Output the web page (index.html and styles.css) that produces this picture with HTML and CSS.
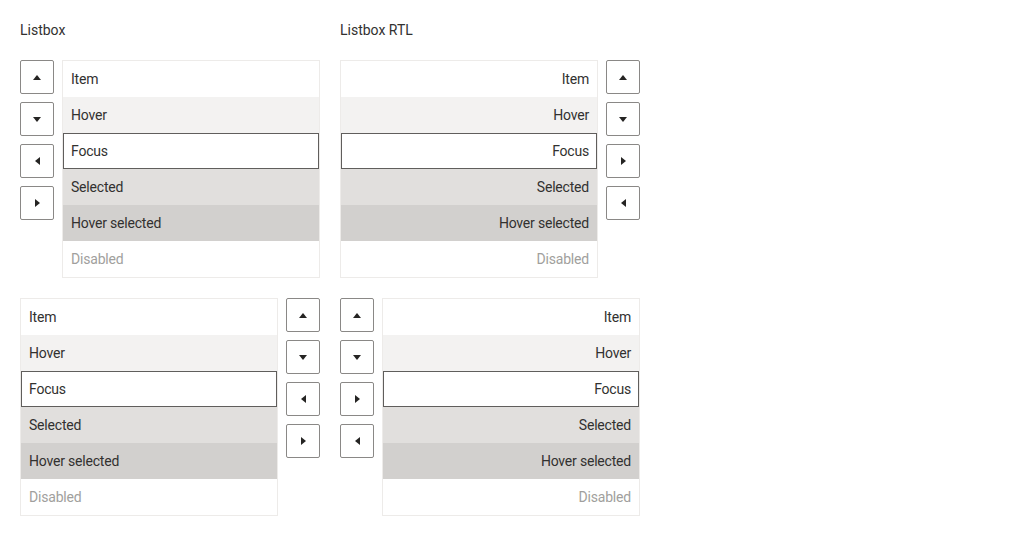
FILE: index.html
```html
<!DOCTYPE html>
<html>
<head>
<meta charset="utf-8">
<link rel="stylesheet" href="styles.css">
</head>
<body>
<div class="page">
  <div class="col">
    <div class="title">Listbox</div>
  </div>
  <div class="col" dir="rtl">
    <div class="title" dir="ltr">Listbox RTL</div>
  </div>

  <div class="group">
    <div class="btns">
      <div class="btn"><span class="tri up"></span></div>
      <div class="btn"><span class="tri down"></span></div>
      <div class="btn"><span class="tri left"></span></div>
      <div class="btn"><span class="tri right"></span></div>
    </div>
    <div class="listbox">
      <div class="opt">Item</div>
      <div class="opt hover">Hover</div>
      <div class="opt focus">Focus</div>
      <div class="opt sel">Selected</div>
      <div class="opt hsel">Hover selected</div>
      <div class="opt dis">Disabled</div>
    </div>
  </div>

  <div class="group" dir="rtl">
    <div class="btns">
      <div class="btn"><span class="tri up"></span></div>
      <div class="btn"><span class="tri down"></span></div>
      <div class="btn"><span class="tri right"></span></div>
      <div class="btn"><span class="tri left"></span></div>
    </div>
    <div class="listbox">
      <div class="opt">Item</div>
      <div class="opt hover">Hover</div>
      <div class="opt focus">Focus</div>
      <div class="opt sel">Selected</div>
      <div class="opt hsel">Hover selected</div>
      <div class="opt dis">Disabled</div>
    </div>
  </div>

  <div class="group">
    <div class="listbox">
      <div class="opt">Item</div>
      <div class="opt hover">Hover</div>
      <div class="opt focus">Focus</div>
      <div class="opt sel">Selected</div>
      <div class="opt hsel">Hover selected</div>
      <div class="opt dis">Disabled</div>
    </div>
    <div class="btns">
      <div class="btn"><span class="tri up"></span></div>
      <div class="btn"><span class="tri down"></span></div>
      <div class="btn"><span class="tri left"></span></div>
      <div class="btn"><span class="tri right"></span></div>
    </div>
  </div>

  <div class="group" dir="rtl">
    <div class="listbox">
      <div class="opt">Item</div>
      <div class="opt hover">Hover</div>
      <div class="opt focus">Focus</div>
      <div class="opt sel">Selected</div>
      <div class="opt hsel">Hover selected</div>
      <div class="opt dis">Disabled</div>
    </div>
    <div class="btns">
      <div class="btn"><span class="tri up"></span></div>
      <div class="btn"><span class="tri down"></span></div>
      <div class="btn"><span class="tri right"></span></div>
      <div class="btn"><span class="tri left"></span></div>
    </div>
  </div>
</div>
</body>
</html>
```

FILE: styles.css
```css
html, body {
  margin: 0;
  padding: 0;
  background: #ffffff;
}
body {
  font-family: Roboto, "Liberation Sans", sans-serif;
  font-size: 14px;
  color: #323130;
}
.page {
  display: grid;
  grid-template-columns: 300px 300px;
  column-gap: 20px;
  row-gap: 20px;
  padding: 20px;
}
.title {
  height: 20px;
  line-height: 20px;
  color: #323130;
}
.col[dir="rtl"] .title {
  text-align: left;
}
.group {
  display: flex;
  gap: 8px;
  align-items: flex-start;
}
.btns {
  display: flex;
  flex-direction: column;
  gap: 8px;
}
.btn {
  box-sizing: border-box;
  width: 34px;
  height: 34px;
  border: 1px solid #8a8886;
  border-radius: 2px;
  display: flex;
  align-items: center;
  justify-content: center;
  background: #fff;
}
.tri {
  width: 0;
  height: 0;
  display: block;
}
.tri.up {
  border-left: 4px solid transparent;
  border-right: 4px solid transparent;
  border-bottom: 5px solid #252423;
}
.tri.down {
  border-left: 4px solid transparent;
  border-right: 4px solid transparent;
  border-top: 5px solid #252423;
}
.tri.left {
  border-top: 4px solid transparent;
  border-bottom: 4px solid transparent;
  border-right: 5px solid #252423;
}
.tri.right {
  border-top: 4px solid transparent;
  border-bottom: 4px solid transparent;
  border-left: 5px solid #252423;
}
.listbox {
  box-sizing: border-box;
  width: 258px;
  border: 1px solid #edebe9;
  display: flex;
  flex-direction: column;
}
.opt {
  box-sizing: border-box;
  height: 36px;
  line-height: 36px;
  padding: 0 8px;
  color: #323130;
  letter-spacing: -0.2px;
}
.opt.hover {
  background: #f3f2f1;
}
.opt.focus {
  border: 1px solid #605e5c;
  line-height: 34px;
  padding: 0 7px;
}
.opt.sel {
  background: #e1dfdd;
}
.opt.hsel {
  background: #d2d0ce;
}
.opt.dis {
  color: #a19f9d;
}
```
